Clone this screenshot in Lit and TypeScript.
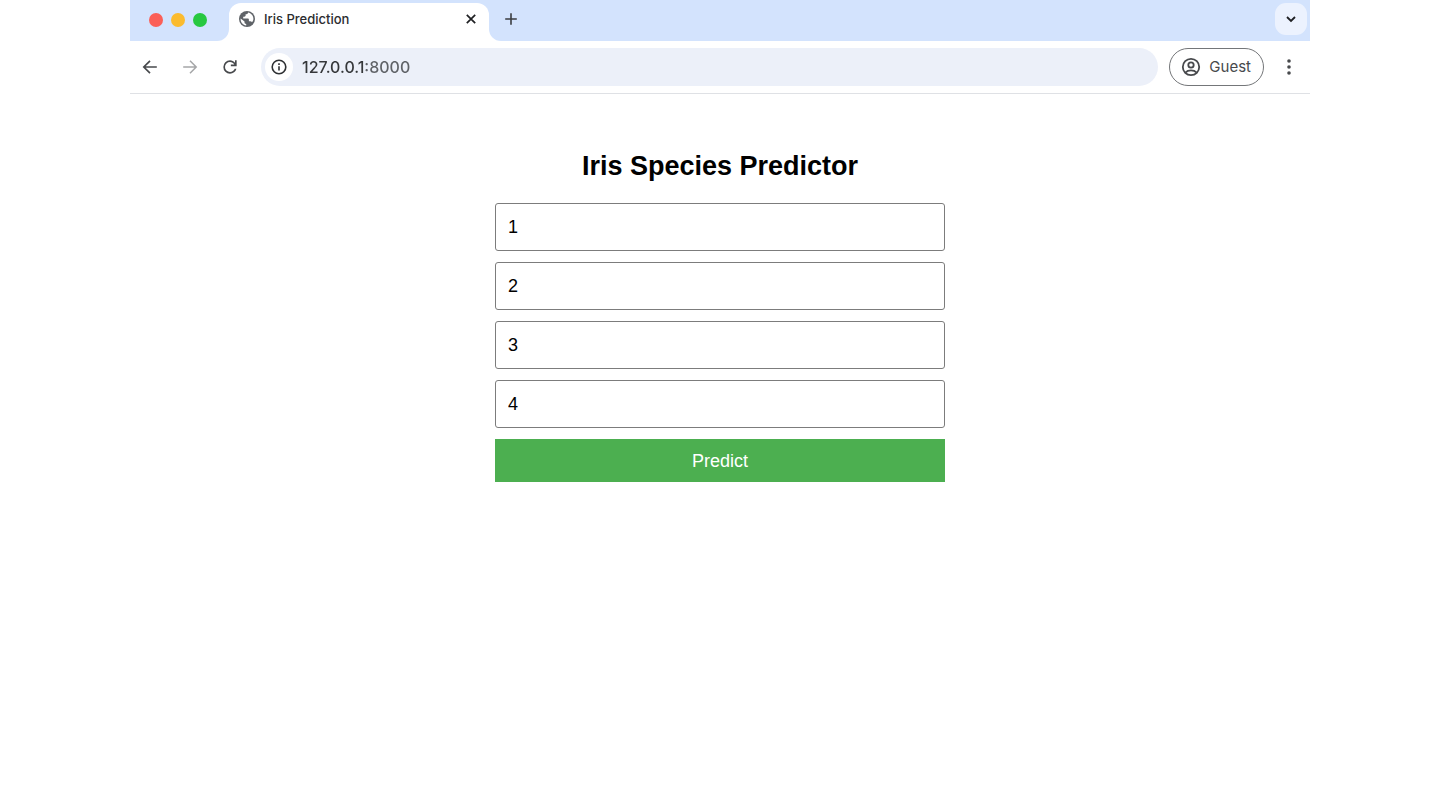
import { LitElement, html, css } from "lit";
import { customElement, state } from "lit/decorators.js";

@customElement("browser-tabs")
class BrowserTabs extends LitElement {
  static styles = css`
    :host { display: flex; height: 41px; font-family: Inter, Roboto, sans-serif; }
    button { border: 0; padding: 0; background: none; color: #3b3d40; display: grid; place-items: center; }
    .lights {
      display: flex; align-items: center; gap: 8px; box-sizing: border-box; width: 99px;
      padding: 0 0 2px 19px; background: #d3e3fd; border-bottom-right-radius: 12px;
    }
    .light { width: 14px; height: 14px; border-radius: 50%; }
    .close-light { background: #fb5f57; }
    .min-light { background: #fbbb2e; }
    .max-light { background: #27c840; }
    .tab-slot { box-sizing: border-box; width: 260px; padding-top: 3px; background: #d3e3fd; }
    .tab {
      display: flex; align-items: center; box-sizing: border-box; height: 38px; gap: 8px;
      padding: 0 10px 6px 9px; background: #fff; border-radius: 12px 12px 0 0; color: #2b2c2f;
    }
    .title { flex: 1; font-size: 13px; line-height: 18px; font-weight: 500; white-space: nowrap; }
    .rest {
      flex: 1; display: flex; align-items: center; justify-content: space-between; min-width: 0;
      padding: 0 3px 3px 14px; background: #d3e3fd; border-bottom-left-radius: 12px;
    }
    .menu { width: 32px; height: 32px; border-radius: 11px; background: #ecf2fe; color: #1f2023; }
    svg { display: block; }
  `;

  render() {
    return html`
      <div class="lights">
        <button class="light close-light" aria-label="Close window"></button>
        <button class="light min-light" aria-label="Minimise window"></button>
        <button class="light max-light" aria-label="Zoom window"></button>
      </div>
      <div class="tab-slot">
        <div class="tab">
          <svg width="18" height="18" viewBox="0 0 18 18">
            <circle cx="9" cy="9" r="8" fill="#5f6368" />
            <path fill="#fff" d="M10 2.6c0 1.1-.7 1.700-1.600 1.700h-.8v1.200c0 .7-.6 1.200-1.300 1.200H5.200v1.700h4.400c.8 0 1.300.5 1.300 1.300v1.500h1.300c.9 0 1.500.4 1.800 1.100.9-1 1.400-2.200 1.400-3.500 0-3-2.200-5.600-5.400-6.200zM2.600 8.400c-.3 3.600 2.300 6.500 5.600 7v-1.500c-1 0-1.700-.7-1.700-1.600v-.8z" />
          </svg>
          <span class="title">Iris Prediction</span>
          <button aria-label="Close tab">
            <svg width="16" height="16" viewBox="0 0 16 16" fill="none" stroke="#1f2023" stroke-width="1.7">
              <path d="M3.8 3.8l8.4 8.4M12.2 3.8l-8.4 8.4" />
            </svg>
          </button>
        </div>
      </div>
      <div class="rest">
        <button aria-label="New tab">
          <svg width="16" height="16" viewBox="0 0 16 16" fill="none" stroke="#3b3d40" stroke-width="1.6">
            <path d="M8 2.2v11.6M2.2 8h11.6" />
          </svg>
        </button>
        <button class="menu" aria-label="Search tabs">
          <svg width="16" height="16" viewBox="0 0 16 16" fill="none" stroke="currentColor" stroke-width="1.8">
            <path d="M4 6l4 4 4-4" />
          </svg>
        </button>
      </div>
    `;
  }
}

@customElement("browser-toolbar")
class BrowserToolbar extends LitElement {
  static styles = css`
    :host {
      display: flex; align-items: center; box-sizing: border-box; height: 53px;
      padding: 0 11px 0 10px; border-bottom: 1px solid #dfe1e5; font-family: Inter, Roboto, sans-serif;
    }
    button { border: 0; padding: 0; background: none; color: #47494c; display: grid; place-items: center; }
    .nav { display: flex; gap: 20px; margin-right: 21px; }
    .address {
      flex: 1; display: flex; align-items: center; box-sizing: border-box; min-width: 0; height: 38px;
      gap: 9px; padding: 0 4px; border-radius: 19px; background: #ecf0f9;
    }
    .info { width: 28px; height: 28px; border-radius: 50%; background: #fff; color: #2e3033; }
    .url {
      flex: 1; min-width: 0; border: 0; padding: 0; outline: 0; height: 24px; font: 500 16px/24px Inter, Roboto, sans-serif;
      color: transparent; background: linear-gradient(90deg, #35373a 63px, #5f6267 63px); -webkit-background-clip: text; background-clip: text;
    }
    .guest {
      display: flex; align-items: center; box-sizing: border-box; height: 38px; gap: 8px; margin: 0 15px 0 11px;
      padding: 0 12px 0 11px; border: 1px solid #747679; border-radius: 19px; font: 15px/20px Inter, Roboto, sans-serif;
    }
    svg { display: block; }
  `;

  render() {
    return html`
      <div class="nav">
        <button aria-label="Back">
          <svg width="20" height="20" viewBox="0 0 20 20" fill="none" stroke="#47494c" stroke-width="1.7">
            <path d="M16.8 10H4M10 3.8L3.8 10l6.2 6.2" />
          </svg>
        </button>
        <button aria-label="Forward">
          <svg width="20" height="20" viewBox="0 0 20 20" fill="none" stroke="#a5a6a8" stroke-width="1.5">
            <path d="M3.2 10H16M10 3.8l6.2 6.2-6.2 6.2" />
          </svg>
        </button>
        <button aria-label="Reload">
          <svg width="20" height="20" viewBox="0 0 24 24" fill="#47494c">
            <path d="M12 20q-3.35 0-5.675-2.325T4 12q0-3.35 2.325-5.675T12 4q1.725 0 3.3.7125T18 6.75V4h2v7h-7V9h4.2q-.8-1.4-2.1875-2.2T12 6Q9.5 6 7.75 7.75T6 12q0 2.5 1.75 4.25T12 18q1.925 0 3.475-1.1T17.65 14h2.1q-.7 2.65-2.85 4.325T12 20z" />
          </svg>
        </button>
      </div>
      <div class="address">
        <button class="info" aria-label="View site information">
          <svg width="18" height="18" viewBox="0 0 18 18" fill="none" stroke="currentColor" stroke-width="1.6">
            <circle cx="9" cy="9" r="6.8" />
            <path d="M9 8.2v4.3M9 5.2v1.7" />
          </svg>
        </button>
        <input class="url" aria-label="Address" .value=${"127.0.0.1:8000"} spellcheck="false" />
      </div>
      <button class="guest">
        <svg width="20" height="20" viewBox="0 0 20 20" fill="none" stroke="#47494c" stroke-width="1.8">
          <circle cx="10" cy="10" r="8.2" />
          <circle cx="10" cy="8" r="2.7" />
          <path d="M4.3 15.6c1.5-1.5 3.5-2.2 5.7-2.2s4.2.7 5.7 2.2" />
        </svg>
        Guest
      </button>
      <button aria-label="Browser menu">
        <svg width="20" height="20" viewBox="0 0 20 20" fill="#47494c">
          <circle cx="10" cy="4" r="1.8" />
          <circle cx="10" cy="10" r="1.8" />
          <circle cx="10" cy="16" r="1.8" />
        </svg>
      </button>
    `;
  }
}

@customElement("iris-form")
class IrisForm extends LitElement {
  static styles = css`
    :host { display: block; padding: 54px 20px; font-family: "Liberation Sans", Arial, sans-serif; }
    form { display: flex; flex-direction: column; gap: 11px; max-width: 450px; margin: 0 auto; }
    h1 { margin: 0 0 8px; font-size: 27px; line-height: 36px; font-weight: 700; text-align: center; color: #000; }
    input {
      box-sizing: border-box; width: 100%; height: 48px; padding: 0 12px; border: 1px solid #7c7c7c;
      border-radius: 3px; background: #fff; color: #000; font: 18px/24px "Liberation Sans", Arial, sans-serif;
    }
    .predict {
      height: 43px; border: 0; padding: 0; background: #4caf50; color: #fff;
      font: 18px/24px "Liberation Sans", Arial, sans-serif; cursor: pointer;
    }
  `;

  @state() private values = ["1", "2", "3", "4"];
  private names = ["Sepal length", "Sepal width", "Petal length", "Petal width"];

  render() {
    return html`
      <form @submit=${(e: Event) => e.preventDefault()}>
        <h1>Iris Species Predictor</h1>
        ${this.names.map(
          (name, i) => html`<input aria-label=${name} inputmode="decimal" .value=${this.values[i]} required />`
        )}
        <button class="predict">Predict</button>
      </form>
    `;
  }
}

@customElement("app-root")
class AppRoot extends LitElement {
  static styles = css`
    :host { display: block; min-height: 100vh; box-sizing: border-box; padding: 0 130px; background: #fff; }
    @media (max-width: 900px) {
      :host { padding: 0; }
    }
  `;

  render() {
    return html`
      <browser-tabs></browser-tabs>
      <browser-toolbar></browser-toolbar>
      <main><iris-form></iris-form></main>
    `;
  }
}
